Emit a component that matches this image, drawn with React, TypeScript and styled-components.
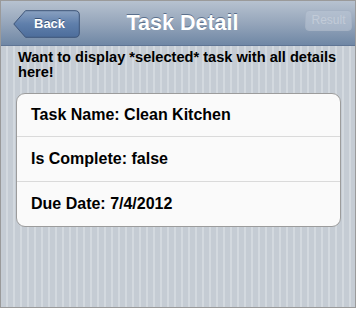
import React from 'react';
import styled, { createGlobalStyle } from 'styled-components';

const GlobalStyle = createGlobalStyle`
  html, body {
    margin: 0;
    padding: 0;
    background: #ffffff;
  }
  body {
    font-family: "Liberation Sans", Arial, Helvetica, sans-serif;
  }
`;

const Screen = styled.div`
  width: 356px;
  height: 308px;
  box-sizing: border-box;
  border: 1px solid #9a9a9a;
  display: flex;
  flex-direction: column;
  background-color: #c5ccd4;
  background-image: linear-gradient(
    to right,
    #c5ccd4 0,
    #c5ccd4 5px,
    #d3d9df 5px,
    #d3d9df 7px
  );
  background-size: 7px 100%;
  overflow: hidden;
`;

const Toolbar = styled.div`
  height: 44px;
  flex: none;
  display: grid;
  grid-template-columns: 1fr auto 1fr;
  align-items: center;
  padding: 0 3px 0 12px;
  background: linear-gradient(to bottom, #b7c2d0 0%, #96a6bb 50%, #6f87a5 100%);
  border-bottom: 1px solid #5f7594;
`;

const BackButton = styled.button`
  position: relative;
  justify-self: start;
  width: 67px;
  height: 28px;
  margin-top: 1px;
  padding: 0 0 0 21px;
  border: none;
  background: none;
  color: #ffffff;
  font-family: inherit;
  font-weight: bold;
  font-size: 13px;
  text-align: left;
  text-shadow: 0 -1px 0 #3a5478;

  svg {
    position: absolute;
    left: 0;
    top: 0;
  }

  span {
    position: relative;
  }
`;

const Title = styled.h1`
  margin: 0;
  color: #ffffff;
  font-size: 21.5px;
  font-weight: bold;
  text-shadow: 0 -1px 0 #5a6f8c;
`;

const ResultButton = styled.button`
  justify-self: end;
  width: 47px;
  height: 21px;
  margin-bottom: 6px;
  padding: 0;
  border: 1px solid #a5b2c4;
  border-radius: 4px;
  background: linear-gradient(to bottom, #b3bfcf, #a6b4c7);
  color: #c2cbd8;
  font-family: inherit;
  font-size: 12px;
`;

const Intro = styled.p`
  margin: 4px 0 0;
  padding: 0 4px 0 17px;
  color: #000000;
  font-size: 14.6px;
  font-weight: bold;
  line-height: 15px;
`;

const Card = styled.ul`
  list-style: none;
  margin: 13px 14px 0 15px;
  padding: 0;
  background: #fafafa;
  border: 1px solid #9c9c9c;
  border-radius: 9px;
  overflow: hidden;
`;

const Row = styled.li`
  height: 44px;
  display: flex;
  align-items: center;
  padding: 0 0 0 14px;
  font-size: 16px;
  font-weight: bold;
  color: #000000;
  border-top: 1px solid #dadada;

  &:first-child {
    border-top: none;
    height: 42px;
  }
`;

const BackShape = () => (
  <svg width="67" height="28" viewBox="0 0 67 28">
    <defs>
      <linearGradient id="backFill" x1="0" y1="0" x2="0" y2="1">
        <stop offset="0" stopColor="#8aa1c1" />
        <stop offset="0.5" stopColor="#5f7fab" />
        <stop offset="1" stopColor="#4d6d9b" />
      </linearGradient>
    </defs>
    <path
      d="M0.8 14 L12.5 0.7 H62 Q66.3 0.7 66.3 5 V23 Q66.3 27.3 62 27.3 H12.5 Z"
      fill="url(#backFill)"
      stroke="#3d5478"
      strokeWidth="1"
    />
  </svg>
);

const rows = ['Task Name: Clean Kitchen', 'Is Complete: false', 'Due Date: 7/4/2012'];

export default function App() {
  return (
    <>
      <GlobalStyle />
      <Screen>
        <Toolbar>
          <BackButton>
            <BackShape />
            <span>Back</span>
          </BackButton>
          <Title>Task Detail</Title>
          <ResultButton disabled>Result</ResultButton>
        </Toolbar>
        <Intro>Want to display *selected* task with all details here!</Intro>
        <Card>
          {rows.map((r) => (
            <Row key={r}>{r}</Row>
          ))}
        </Card>
      </Screen>
    </>
  );
}
